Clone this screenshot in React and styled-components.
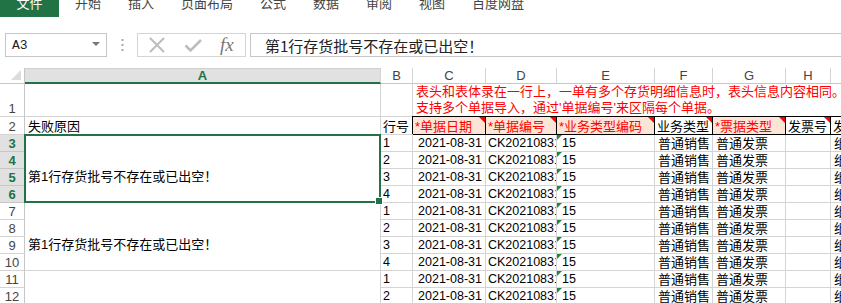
import React from 'react';
import styled, { createGlobalStyle, css } from 'styled-components';

const GREEN = '#217346';
const GRID = '#d4d4d4';
const HDR = '#c6c6c6';
const PEACH = '#fce4d6';

const Global = createGlobalStyle`
  html, body { margin: 0; padding: 0; background: #fff; overflow: hidden; }
  body { font-family: "Liberation Sans", "Noto Sans CJK SC", sans-serif; }
`;

const Page = styled.div`
  width: 841px;
  height: 303px;
  overflow: hidden;
  display: flex;
  flex-direction: column;
`;

const TabBar = styled.div`
  height: 17px;
  flex: none;
  display: flex;
  align-items: flex-start;
  gap: 27px;
  overflow: hidden;
  font-family: "Noto Sans CJK SC", sans-serif;
  font-size: 13px;
  color: #444;
`;

const FileTab = styled.div`
  width: 59px;
  height: 17px;
  flex: none;
  background: ${GREEN};
  color: #fff;
  display: flex;
  justify-content: center;
  align-items: flex-start;
  margin-right: -11px;
  & > span { line-height: 13px; margin-top: -4px; }
`;

const Tab = styled.div`
  flex: none;
  line-height: 13px;
  margin-top: -4px;
`;

const FormulaRow = styled.div`
  margin-top: 16px;
  height: 24px;
  flex: none;
  display: flex;
`;

const NameBox = styled.div`
  margin-left: 5px;
  width: 102px;
  box-sizing: border-box;
  border: 1px solid ${HDR};
  display: flex;
  align-items: center;
  justify-content: space-between;
  padding: 0 6px 0 6px;
  font-family: "Liberation Mono", monospace;
  font-size: 13px;
  color: #222;
`;

const Caret = styled.span`
  width: 0;
  height: 0;
  border-left: 4px solid transparent;
  border-right: 4px solid transparent;
  border-top: 4px solid #777;
  margin-top: -2px;
`;

const Dots = styled.div`
  width: 30px;
  display: flex;
  align-items: center;
  justify-content: center;
`;

const FxGroup = styled.div`
  width: 109px;
  box-sizing: border-box;
  border: 1px solid ${GRID};
  display: flex;
  align-items: center;
  justify-content: space-between;
  padding: 0 10px 0 10px;
`;

const FxText = styled.span`
  font-family: "Liberation Serif", serif;
  font-style: italic;
  font-size: 19px;
  color: #777;
  line-height: 20px;
  width: 15px;
`;

const FormulaInput = styled.div`
  margin-left: 4px;
  flex: 1;
  border-top: 1px solid ${HDR};
  border-bottom: 1px solid ${HDR};
  border-left: 1px solid ${HDR};
  display: flex;
  align-items: center;
  padding-left: 14px;
  font-family: "Noto Sans CJK SC", sans-serif;
  font-size: 15px;
  color: #222;
  white-space: nowrap;
`;

const SheetWrap = styled.div`
  margin-top: 11px;
  flex: 1;
  overflow: hidden;
`;

const Sheet = styled.div`
  display: grid;
  grid-template-columns: 25px 356px 32px 73px 71px 98px 58px 73px 45px 60px;
  grid-template-rows: 16px 33px 18px repeat(12, 17px);
  width: 891px;
`;

const Corner = styled.div`
  box-sizing: border-box;
  border-right: 1px solid ${HDR};
  border-bottom: 1px solid ${HDR};
  position: relative;
  &::after {
    content: '';
    position: absolute;
    right: 3px;
    bottom: 3px;
    border-left: 10px solid transparent;
    border-bottom: 10px solid #dcdcdc;
  }
`;

const ColHead = styled.div`
  box-sizing: border-box;
  display: flex;
  align-items: center;
  justify-content: center;
  font-size: 13px;
  color: #444;
  border-right: 1px solid ${GRID};
  border-bottom: 1px solid ${HDR};
  overflow: hidden;
  ${(p) =>
    p.$active &&
    css`
      background: #e1e1e1;
      color: ${GREEN};
      font-weight: bold;
      border-top: 1px solid #d0d0d0;
      border-bottom: 2px solid ${GREEN};
    `}
`;

const RowHead = styled.div`
  box-sizing: border-box;
  display: flex;
  align-items: flex-end;
  justify-content: center;
  font-size: 13px;
  line-height: 15px;
  color: #444;
  border-right: 1px solid ${HDR};
  border-bottom: 1px solid ${GRID};
  ${(p) =>
    p.$active &&
    css`
      background: #e1e1e1;
      color: ${GREEN};
      font-weight: bold;
      border-bottom-color: ${HDR};
    `}
`;

const Cell = styled.div`
  box-sizing: border-box;
  position: relative;
  display: flex;
  align-items: flex-end;
  justify-content: ${(p) => (p.$right ? 'flex-end' : 'flex-start')};
  padding: 0 ${(p) => (p.$right ? '3px' : '2px')} 0 ${(p) => p.$padLeft || 2}px;
  font-size: ${(p) => (p.$num ? '12.5px' : '13px')};
  line-height: 15px;
  color: #000;
  white-space: nowrap;
  overflow: hidden;
  border-right: 1px solid ${GRID};
  border-bottom: 1px solid ${GRID};
  grid-column: ${(p) => p.$col || 'auto'};
  grid-row: ${(p) => p.$row || 'auto'};
  ${(p) =>
    p.$textFlag &&
    css`
      &::before {
        content: '';
        position: absolute;
        left: 0;
        top: 0;
        border-right: 5px solid transparent;
        border-top: 5px solid #1e8a3c;
      }
    `}
`;

const NoteCell = styled.div`
  grid-column: 4 / -1;
  box-sizing: border-box;
  display: flex;
  flex-direction: column;
  justify-content: flex-end;
  padding: 0 0 0 3px;
  font-size: 13px;
  line-height: 16px;
  color: #ff0000;
  white-space: nowrap;
  border-bottom: 1px solid ${GRID};
`;

const HeadCell = styled.div`
  box-sizing: border-box;
  position: relative;
  display: flex;
  align-items: flex-end;
  padding: 0 2px;
  font-size: 13px;
  line-height: 15px;
  white-space: nowrap;
  overflow: hidden;
  color: ${(p) => (p.$required ? '#ff0000' : '#000')};
  background: ${(p) => (p.$required ? PEACH : '#fff')};
  border-right: 1px solid #000;
  border-bottom: 1px solid #000;
  box-shadow: -1px -1px 0 #000;
  &::after {
    content: '';
    position: absolute;
    right: 0;
    top: 0;
    border-left: 6px solid transparent;
    border-top: 6px solid #ff0000;
  }
`;

const MergedCell = styled.div`
  box-sizing: border-box;
  position: relative;
  grid-column: 2;
  grid-row: ${(p) => p.$row};
  display: flex;
  align-items: center;
  padding: 16px 2px 0 3px;
  font-size: 13px;
  line-height: 15px;
  white-space: nowrap;
  border-right: 1px solid ${GRID};
  border-bottom: 1px solid ${GRID};
  ${(p) =>
    p.$selected &&
    css`
      z-index: 2;
      &::before {
        content: '';
        position: absolute;
        left: -1px;
        top: -1px;
        right: -1px;
        bottom: -1px;
        border: 2px solid ${GREEN};
        pointer-events: none;
      }
      &::after {
        content: '';
        position: absolute;
        right: -2px;
        bottom: -2px;
        width: 6px;
        height: 6px;
        background: ${GREEN};
        box-shadow: 0 0 0 1px #fff;
      }
    `}
`;

const cols = ['A', 'B', 'C', 'D', 'E', 'F', 'G', 'H', 'I'];
const rowNums = [1, 2, 3, 4, 1, 2, 3, 4, 1, 2, 3, 4];
const msg = '第1行存货批号不存在或已出空！';

function XIcon() {
  return (
    <svg width="18" height="18" viewBox="0 0 18 18">
      <path d="M2 2 L16 16 M16 2 L2 16" stroke="#bdbdbd" strokeWidth="2" fill="none" />
    </svg>
  );
}

function CheckIcon() {
  return (
    <svg width="18" height="18" viewBox="0 0 18 18">
      <path d="M1.5 9.5 L6.5 14.5 L17 4" stroke="#bdbdbd" strokeWidth="2.6" fill="none" />
    </svg>
  );
}

function DotsIcon() {
  return (
    <svg width="3" height="12" viewBox="0 0 3 12">
      <rect x="0.5" y="0" width="2" height="2" fill="#a8a8a8" />
      <rect x="0.5" y="5" width="2" height="2" fill="#a8a8a8" />
      <rect x="0.5" y="10" width="2" height="2" fill="#a8a8a8" />
    </svg>
  );
}

export default function App() {
  const dataRows = rowNums.map((n, i) => {
    const r = i + 3;
    return (
      <React.Fragment key={r}>
        <RowHead $active={r >= 3 && r <= 6} style={{ gridRow: i + 4, gridColumn: 1 }}>
          {r}
        </RowHead>
        <Cell $num $col={3} $row={i + 4}>{n}</Cell>
        <Cell $num $right $col={4} $row={i + 4}>2021-08-31</Cell>
        <Cell $num $col={5} $row={i + 4}>CK20210831001</Cell>
        <Cell $num $textFlag $padLeft={5} $col={6} $row={i + 4}>15</Cell>
        <Cell $padLeft={3} $col={7} $row={i + 4}>普通销售</Cell>
        <Cell $padLeft={3} $col={8} $row={i + 4}>普通发票</Cell>
        <Cell $col={9} $row={i + 4} />
        <Cell $padLeft={3} $col={10} $row={i + 4}>纸质发票</Cell>
      </React.Fragment>
    );
  });

  return (
    <>
      <Global />
      <Page>
        <TabBar>
          <FileTab><span>文件</span></FileTab>
          <Tab>开始</Tab>
          <Tab>插入</Tab>
          <Tab>页面布局</Tab>
          <Tab>公式</Tab>
          <Tab>数据</Tab>
          <Tab>审阅</Tab>
          <Tab>视图</Tab>
          <Tab>百度网盘</Tab>
        </TabBar>

        <FormulaRow>
          <NameBox>
            <span>A3</span>
            <Caret />
          </NameBox>
          <Dots><DotsIcon /></Dots>
          <FxGroup>
            <XIcon />
            <CheckIcon />
            <FxText>fx</FxText>
          </FxGroup>
          <FormulaInput>{msg}</FormulaInput>
        </FormulaRow>

        <SheetWrap>
          <Sheet>
            <Corner />
            {cols.map((c) => (
              <ColHead key={c} $active={c === 'A'}>{c}</ColHead>
            ))}

            <RowHead>1</RowHead>
            <Cell />
            <Cell />
            <NoteCell>
              <span>表头和表体录在一行上，一单有多个存货明细信息时，表头信息内容相同。</span>
              <span>支持多个单据导入，通过'单据编号'来区隔每个单据。</span>
            </NoteCell>

            <RowHead>2</RowHead>
            <Cell $padLeft={3}>失败原因</Cell>
            <Cell>行号</Cell>
            <HeadCell $required>*单据日期</HeadCell>
            <HeadCell $required>*单据编号</HeadCell>
            <HeadCell $required>*业务类型编码</HeadCell>
            <HeadCell>业务类型</HeadCell>
            <HeadCell $required>*票据类型</HeadCell>
            <HeadCell>发票号</HeadCell>
            <HeadCell>发票日期</HeadCell>

            <MergedCell $row="4 / span 4" $selected>{msg}</MergedCell>
            <MergedCell $row="8 / span 4">{msg}</MergedCell>
            <MergedCell $row="12 / span 4">{msg}</MergedCell>

            {dataRows}
          </Sheet>
        </SheetWrap>
      </Page>
    </>
  );
}
